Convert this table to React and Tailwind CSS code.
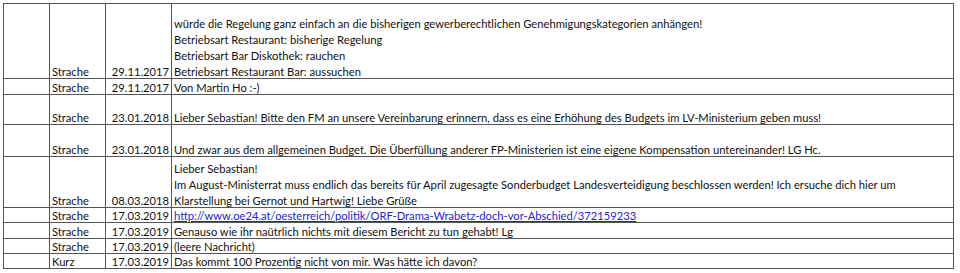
const ROWS = [
  {
    h: 75,
    name: "Strache",
    date: "29.11.2017",
    lines: [
      "würde die Regelung ganz einfach an die bisherigen gewerberechtlichen Genehmigungskategorien anhängen!",
      "Betriebsart Restaurant: bisherige Regelung",
      "Betriebsart Bar Diskothek: rauchen",
      "Betriebsart Restaurant Bar: aussuchen",
    ],
  },
  { h: 16, name: "Strache", date: "29.11.2017", lines: ["Von Martin Ho :-)"] },
  {
    h: 30,
    name: "Strache",
    date: "23.01.2018",
    lines: [
      "Lieber Sebastian! Bitte den FM an unsere Vereinbarung erinnern, dass es eine Erhöhung des Budgets im LV-Ministerium geben muss!",
    ],
  },
  {
    h: 32,
    name: "Strache",
    date: "23.01.2018",
    lines: [
      "Und zwar aus dem allgemeinen Budget. Die Überfüllung anderer FP-Ministerien ist eine eigene Kompensation untereinander! LG Hc.",
    ],
  },
  {
    h: 51,
    name: "Strache",
    date: "08.03.2018",
    lines: [
      "Lieber Sebastian!",
      "Im August-Ministerrat muss endlich das bereits für April zugesagte Sonderbudget Landesverteidigung beschlossen werden! Ich ersuche dich hier um",
      "Klarstellung bei Gernot und Hartwig! Liebe Grüße",
    ],
  },
  {
    h: 15,
    name: "Strache",
    date: "17.03.2019",
    link: "http://www.oe24.at/oesterreich/politik/ORF-Drama-Wrabetz-doch-vor-Abschied/372159233",
  },
  {
    h: 16,
    name: "Strache",
    date: "17.03.2019",
    lines: ["Genauso wie ihr naütrlich nichts mit diesem Bericht zu tun gehabt! Lg"],
  },
  { h: 15, name: "Strache", date: "17.03.2019", lines: ["(leere Nachricht)"] },
  {
    h: 15,
    name: "Kurz",
    date: "17.03.2019",
    lines: ["Das kommt 100 Prozentig nicht von mir. Was hätte ich davon?"],
  },
];

export default function App() {
  return (
    <div
      className="h-[273px] w-[960px] bg-white pl-[3px] pt-[3px] text-[11.2px] text-[#111]"
      style={{ fontFamily: "Lato, 'Open Sans', sans-serif" }}
    >
      <table className="w-[951px] table-fixed border-collapse">
        <colgroup>
          <col className="w-[46px]" />
          <col className="w-[56px]" />
          <col className="w-[66px]" />
          <col />
        </colgroup>
        <tbody>
          {ROWS.map((row, index) => (
            <tr key={index} style={{ height: row.h }}>
              <td className="border border-[#555] p-0" />
              <td className="border border-[#555] px-[2px] py-0 align-bottom leading-[13px]">
                {row.name}
              </td>
              <td className="border border-[#555] px-[2px] py-0 text-right align-bottom leading-[13px]">
                {row.date}
              </td>
              <td className="border border-[#555] px-[2px] py-0 align-bottom leading-[13px]">
                {row.link ? (
                  <a href="#" className="text-[#2424d6] underline">
                    {row.link}
                  </a>
                ) : (
                  <div className="flex flex-col gap-[3px]">
                    {row.lines.map((line, i) => (
                      <div key={i}>{line}</div>
                    ))}
                  </div>
                )}
              </td>
            </tr>
          ))}
        </tbody>
      </table>
    </div>
  );
}
